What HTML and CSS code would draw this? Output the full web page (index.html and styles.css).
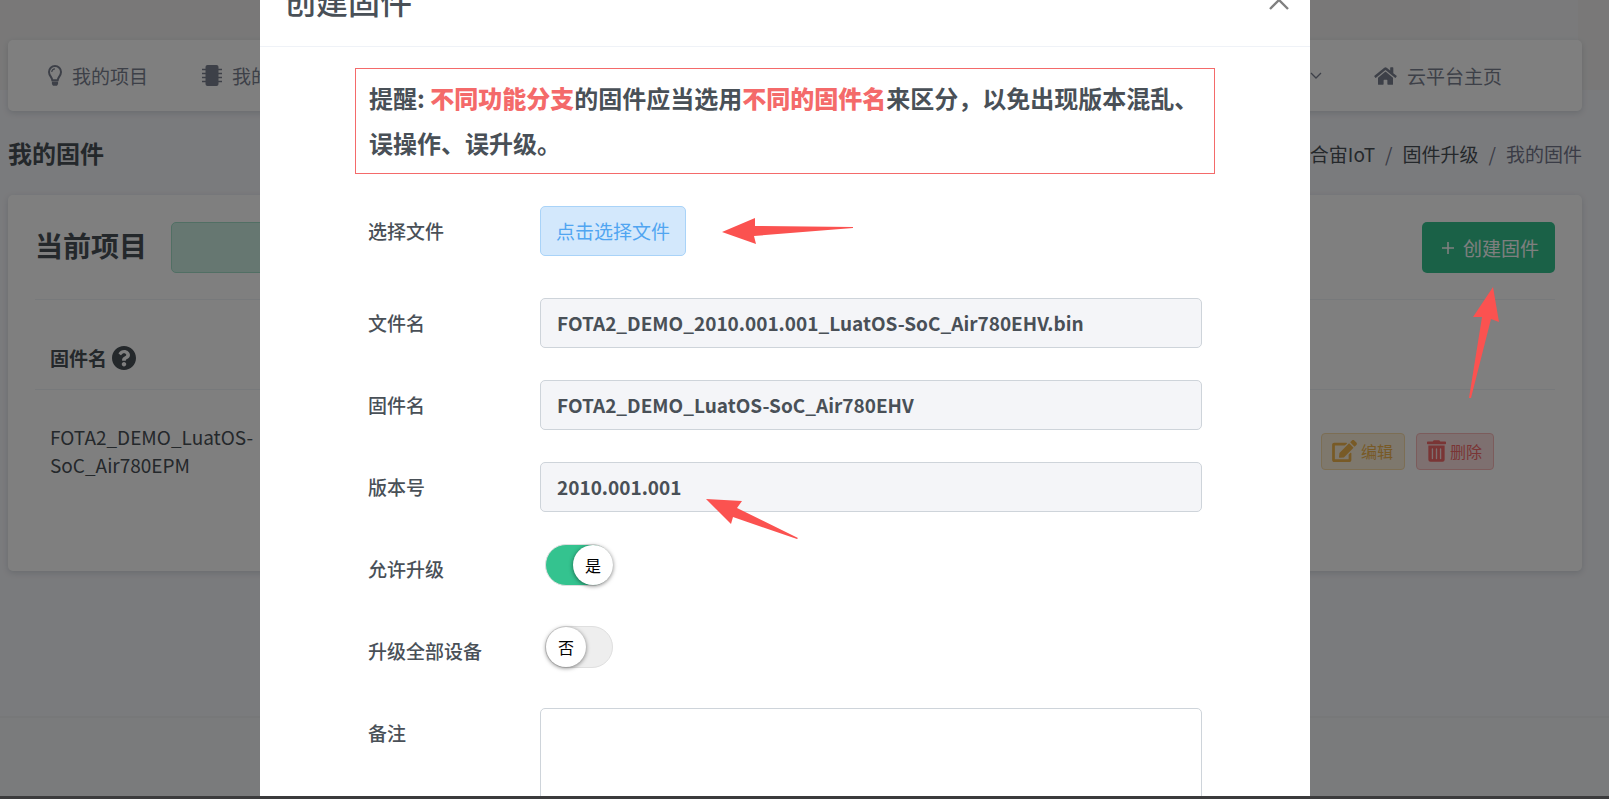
FILE: index.html
```html
<!DOCTYPE html>
<html lang="zh-CN">
<head>
    <meta charset="UTF-8">
    <meta name="viewport" content="width=device-width, initial-scale=1.0">
    <title>我的固件</title>
    <link rel="stylesheet" href="styles.css">
</head>
<body>
    <div class="page">
        <div class="topbar"><div class="user-box"></div></div>

        <nav class="nav">
            <a class="nav-item" href="#">
                <svg class="icon-bulb" viewBox="0 0 14 21"><path fill="none" stroke="currentColor" stroke-width="2" d="M4.3 15.3C4.2 12 1 11 1 7a6 6 0 0 1 12 0c0 4-3.2 5-3.3 8.3z"/><path fill="none" stroke="currentColor" stroke-width="1.2" d="M3.8 7A3.2 3.2 0 0 1 7 3.8"/><path fill="currentColor" d="M3.9 16.5h6.2V19L9 20.8H5L3.9 19z"/></svg>
                我的项目
            </a>
            <a class="nav-item" href="#">
                <svg class="icon-chip" viewBox="0 0 20 21"><rect x="3.5" width="13" height="21" rx="2" fill="currentColor"/><path stroke="currentColor" stroke-width="1.3" d="M0 4.5h20M0 8.5h20M0 12.5h20M0 16.5h20"/></svg>
                我的
            </a>
            <a class="nav-item nav-more" href="#" aria-label="更多">
                <svg class="icon-down" viewBox="0 0 12 8"><path fill="none" stroke="currentColor" stroke-width="1.3" d="M1 1l5 5 5-5"/></svg>
            </a>
            <a class="nav-item" href="#">
                <svg class="icon-home" viewBox="0 0 576 512"><path fill="currentColor" d="M280.37 148.26L96 300.11V464a16 16 0 0 0 16 16l112.06-.29a16 16 0 0 0 15.92-16V368a16 16 0 0 1 16-16h64a16 16 0 0 1 16 16v95.64a16 16 0 0 0 16 16.05L464 480a16 16 0 0 0 16-16V300L295.67 148.26a12.19 12.19 0 0 0-15.3 0zM571.6 251.47L488 182.56V44.05a12 12 0 0 0-12-12h-56a12 12 0 0 0-12 12v72.61L318.47 43a48 48 0 0 0-61 0L4.34 251.47a12 12 0 0 0-1.6 16.9l25.5 31A12 12 0 0 0 45.15 301l235.22-193.74a12.19 12.19 0 0 1 15.3 0L530.9 301a12 12 0 0 0 16.9-1.6l25.5-31a12 12 0 0 0-1.7-16.93z"/></svg>
                云平台主页
            </a>
        </nav>

        <div class="page-title">
            <h4>我的固件</h4>
            <div class="breadcrumb">
                <a href="#">合宙IoT</a><span>/</span><a href="#">固件升级</a><span>/</span><span class="current">我的固件</span>
            </div>
        </div>

        <main class="card">
            <div class="card-head">
                <h3>当前项目</h3>
                <div class="project"></div>
                <button class="btn-create" type="button">
                    <svg viewBox="0 0 12 12"><path stroke="currentColor" stroke-width="1.6" d="M6 0v12M0 6h12"/></svg>
                    创建固件
                </button>
            </div>
            <table>
                <thead>
                    <tr>
                        <th class="col-name">
                            <div class="th-name">
                                固件名
                                <svg class="icon-help" viewBox="8 8 496 496"><path fill="currentColor" d="M504 256c0 136.997-111.043 248-248 248S8 392.997 8 256C8 119.083 119.043 8 256 8s248 111.083 248 248zM262.655 90c-54.497 0-89.255 22.957-116.549 63.758-3.536 5.286-2.353 12.415 2.715 16.258l34.699 26.31c5.205 3.947 12.621 3.008 16.665-2.122 17.864-22.658 30.113-35.797 57.303-35.797 20.429 0 45.698 13.148 45.698 32.958 0 14.976-12.363 22.667-32.534 33.976C247.128 238.528 216 254.941 216 296v4c0 6.627 5.373 12 12 12h56c6.627 0 12-5.373 12-12v-1.333c0-28.462 83.186-29.647 83.186-106.667 0-58.002-60.165-102-116.531-102zM256 338c-25.365 0-46 20.635-46 46 0 25.364 20.635 46 46 46s46-20.636 46-46c0-25.365-20.635-46-46-46z"/></svg>
                            </div>
                        </th>
                        <th></th>
                        <th class="col-action"></th>
                    </tr>
                </thead>
                <tbody>
                    <tr>
                        <td>FOTA2_DEMO_LuatOS-<wbr>SoC_Air780EPM</td>
                        <td></td>
                        <td>
                            <div class="actions">
                                <button class="btn-sm btn-edit" type="button">
                                    <svg class="icon-edit" viewBox="0 0 576 512"><path fill="currentColor" d="M402.6 83.2l90.2 90.2c3.8 3.8 3.8 10 0 13.8L274.4 405.6l-92.8 10.3c-12.4 1.4-22.9-9.1-21.5-21.5l10.3-92.8L388.8 83.2c3.8-3.8 10-3.8 13.8 0zm162-22.9l-48.8-48.8c-15.2-15.2-39.9-15.2-55.2 0l-35.4 35.4c-3.8 3.8-3.8 10 0 13.8l90.2 90.2c3.8 3.8 10 3.8 13.8 0l35.4-35.4c15.2-15.3 15.2-40 0-55.2zM384 346.2V448H64V128h229.8c3.2 0 6.2-1.3 8.5-3.5l40-40c7.6-7.6 2.2-20.5-8.5-20.5H48C21.5 64 0 85.5 0 112v352c0 26.5 21.5 48 48 48h352c26.5 0 48-21.5 48-48V306.2c0-10.7-12.9-16-20.5-8.5l-40 40c-2.2 2.3-3.5 5.3-3.5 8.5z"/></svg>
                                    编辑
                                </button>
                                <button class="btn-sm btn-delete" type="button">
                                    <svg class="icon-trash" viewBox="0 0 448 512"><path fill="currentColor" d="M32 464a48 48 0 0 0 48 48h288a48 48 0 0 0 48-48V128H32zm272-256a16 16 0 0 1 32 0v224a16 16 0 0 1-32 0zm-96 0a16 16 0 0 1 32 0v224a16 16 0 0 1-32 0zm-96 0a16 16 0 0 1 32 0v224a16 16 0 0 1-32 0zM432 32H312l-9.4-18.7A24 24 0 0 0 281.1 0H166.8a23.72 23.72 0 0 0-21.4 13.3L136 32H16A16 16 0 0 0 0 48v32a16 16 0 0 0 16 16h416a16 16 0 0 0 16-16V48a16 16 0 0 0-16-16z"/></svg>
                                    删除
                                </button>
                            </div>
                        </td>
                    </tr>
                </tbody>
            </table>
        </main>

        <footer class="footer"></footer>
    </div>

    <div class="overlay">
        <div class="modal" role="dialog" aria-labelledby="modalTitle">
            <div class="modal-header">
                <h2 id="modalTitle">创建固件</h2>
                <button class="close" type="button" aria-label="关闭">
                    <svg viewBox="0 0 20 20"><path stroke="currentColor" stroke-width="2.4" d="M1 1l18 18M19 1L1 19"/></svg>
                </button>
            </div>
            <form class="modal-body">
                <p class="notice">提醒: <b>不同功能分支</b>的固件应当选用<b>不同的固件名</b>来区分，以免出现版本混乱、误操作、误升级。</p>

                <div class="row row-file">
                    <label for="pick">选择文件</label>
                    <button class="btn-file" id="pick" type="button">点击选择文件</button>
                </div>
                <div class="row">
                    <label for="file">文件名</label>
                    <input class="field" id="file" type="text" value="FOTA2_DEMO_2010.001.001_LuatOS-SoC_Air780EHV.bin" readonly>
                </div>
                <div class="row">
                    <label for="name">固件名</label>
                    <input class="field" id="name" type="text" value="FOTA2_DEMO_LuatOS-SoC_Air780EHV" readonly>
                </div>
                <div class="row">
                    <label for="version">版本号</label>
                    <input class="field" id="version" type="text" value="2010.001.001" readonly>
                </div>
                <div class="row">
                    <label for="allow">允许升级</label>
                    <div class="switch">
                        <input id="allow" type="checkbox" checked>
                        <span class="knob">是</span>
                    </div>
                </div>
                <div class="row">
                    <label for="all">升级全部设备</label>
                    <div class="switch">
                        <input id="all" type="checkbox">
                        <span class="knob">否</span>
                    </div>
                </div>
                <div class="row">
                    <label for="remark">备注</label>
                    <textarea class="field" id="remark"></textarea>
                </div>
            </form>
        </div>
    </div>

    <!-- red pointers -->
    <svg class="arrow arrow-file" viewBox="0 0 132 26"><path d="M0 14L33 0v8l98 1v1L32 18l2 8z"/></svg>
    <svg class="arrow arrow-version" viewBox="0 0 92 41"><path d="M0 0l36 2-5 7 61 30-1 1-64-22-2 7z"/></svg>
    <svg class="arrow arrow-create" viewBox="0 0 30 111"><path d="M24 0l6 35-8-3L2 111H0l13-81H4z"/></svg>

    <div class="bottom-bar"></div>
</body>
</html>
```
FILE: styles.css
```css
:root {
    --green: #34c38f;
    --red: #f46a6a;
    --text: #495057;
    --line: #eff2f7;
}
* {
    box-sizing: border-box;
}
body {
    margin: 0;
    height: 100vh;
    overflow: hidden;
    position: relative;
    font-family: "Noto Sans CJK SC", sans-serif;
    font-size: 19px;
    line-height: 28px;
    color: var(--text);
}
button, input, textarea {
    font-family: inherit;
    font-size: inherit;
}
button {
    cursor: pointer;
}
a {
    color: inherit;
    text-decoration: none;
}
h2, h3, h4, p {
    margin: 0;
}
svg {
    display: block;
    flex: none;
}

/* page */
.page {
    min-height: 100vh;
    display: flex;
    flex-direction: column;
    padding: 0 27px 0 8px;
    background: linear-gradient(#f2f1f1 90px, #f5f6fa 90px);
}
.topbar {
    height: 40px;
    display: flex;
    justify-content: flex-end;
    padding-right: 4px;
}
.user-box {
    width: 108px;
    background: #f4f5f7;
}
.nav {
    height: 71px;
    display: flex;
    align-items: center;
    padding: 0 53px 0 13px;
    background: #fff;
    border-radius: 5px;
    box-shadow: 0 2px 6px rgba(18, 38, 63, 0.15);
    color: #7b8190;
}
.nav-item {
    display: flex;
    align-items: center;
    gap: 10px;
    padding: 0 27px;
}
.nav-more {
    margin-left: auto;
    padding-right: 25px;
}
.icon-bulb {
    width: 14px;
    height: 21px;
}
.icon-chip {
    width: 20px;
    height: 21px;
}
.icon-down {
    width: 12px;
    height: 8px;
}
.icon-home {
    width: 23px;
    height: 20px;
}
.page-title {
    height: 84px;
    display: flex;
    align-items: center;
    justify-content: space-between;
}
.page-title h4 {
    font-size: 24px;
    font-weight: 700;
}
.breadcrumb {
    display: flex;
    gap: 10px;
    padding-top: 2px;
    color: #74788d;
}
.breadcrumb a {
    color: var(--text);
}
.card {
    height: 376px;
    padding: 27px;
    background: #fff;
    border-radius: 5px;
    box-shadow: 0 2px 6px rgba(18, 38, 63, 0.15);
}
.card-head {
    display: flex;
    align-items: flex-start;
    height: 78px;
    border-bottom: 1px solid var(--line);
}
.card-head h3 {
    font-size: 28px;
    font-weight: 700;
    line-height: 46px;
}
.project {
    width: 240px;
    height: 51px;
    margin-left: 24px;
    background: #ccefe3;
    border: 1px solid #a3dfc9;
    border-radius: 5px;
}
.btn-create {
    display: flex;
    align-items: center;
    gap: 9px;
    height: 51px;
    margin-left: auto;
    padding: 0 16px 0 20px;
    color: #fff;
    background: var(--green);
    border: none;
    border-radius: 5px;
}
.btn-create svg {
    width: 12px;
    height: 12px;
}
table {
    width: 100%;
    table-layout: fixed;
    border-collapse: collapse;
}
th {
    padding: 44px 15px 17px;
    font-weight: 700;
    text-align: left;
    border-bottom: 1px solid var(--line);
}
td {
    padding: 33px 15px;
}
.col-name {
    width: 236px;
}
.col-action {
    width: 249px;
}
.th-name {
    display: flex;
    align-items: center;
    gap: 5px;
}
.icon-help {
    width: 24px;
    height: 24px;
}
.actions {
    display: flex;
    gap: 11px;
}
.btn-sm {
    display: flex;
    align-items: center;
    gap: 4px;
    height: 37px;
    padding: 0 11px 0 10px;
    font-size: 16px;
    border: 1px solid;
    border-radius: 4px;
}
.btn-edit {
    color: #f1b44c;
    background: #fcf0db;
    border-color: #f8dca9;
}
.btn-delete {
    color: var(--red);
    background: #fde1e1;
    border-color: #f8b9b9;
}
.icon-edit {
    width: 25px;
    height: 22px;
}
.icon-trash {
    width: 19px;
    height: 22px;
}
.footer {
    flex: 1;
    margin: 145px -27px 0 -8px;
    background: #f5f6f8;
    border-top: 2px solid #eef0f2;
}

/* modal */
.overlay {
    position: absolute;
    inset: 0;
    overflow: hidden;
    padding-right: 39px;
    background: rgba(0, 0, 0, 0.5);
}
.modal {
    width: 1050px;
    max-width: 100%;
    margin: -46px auto 0;
    background: #fff;
}
.modal-header {
    display: flex;
    align-items: center;
    justify-content: space-between;
    height: 93px;
    padding: 0 21px 0 24px;
    border-bottom: 1px solid var(--line);
}
.modal-header h2 {
    font-size: 32px;
    font-weight: 500;
}
.close {
    padding: 0;
    color: #808080;
    background: none;
    border: none;
}
.close svg {
    width: 20px;
    height: 20px;
}
.modal-body {
    padding: 21px 95px 40px;
}
.notice {
    margin-bottom: 32px;
    padding: 6px 13px 8px;
    font-size: 24px;
    font-weight: 700;
    line-height: 45px;
    border: 1px solid var(--red);
}
.notice b {
    color: var(--red);
    font-weight: 900;
}
.row {
    display: flex;
    align-items: flex-start;
    min-height: 50px;
    margin-bottom: 32px;
    padding: 0 13px;
}
.row-file {
    margin-bottom: 42px;
}
.row label {
    flex: none;
    width: 172px;
    line-height: 50px;
    font-weight: 500;
}
.btn-file {
    height: 50px;
    padding: 0 15px 2px;
    color: #50a5f1;
    background: #d3e8fc;
    border: 1px solid #a9d3f8;
    border-radius: 5px;
}
.field {
    flex: 1;
    min-width: 0;
    height: 50px;
    padding: 0 16px 2px;
    color: var(--text);
    font-weight: 700;
    background: #f4f5f8;
    border: 1px solid #ced4da;
    border-radius: 5px;
    outline: none;
}
textarea.field {
    height: 150px;
    background: #fff;
    resize: none;
}
.switch {
    position: relative;
    width: 68px;
    height: 42px;
    margin-left: 5px;
}
.switch input {
    appearance: none;
    display: block;
    width: 100%;
    height: 100%;
    margin: 0;
    background: #eee;
    border: 1px solid #dfdfdf;
    border-radius: 21px;
}
.switch input:checked {
    background: var(--green);
}
.knob {
    position: absolute;
    top: 1px;
    left: 1px;
    width: 40px;
    height: 40px;
    line-height: 40px;
    font-size: 16px;
    text-align: center;
    color: #000;
    background: #fff;
    border-radius: 50%;
    box-shadow: 0 1px 4px rgba(0, 0, 0, 0.5);
    pointer-events: none;
}
.switch input:checked + .knob {
    left: auto;
    right: 0;
}

.arrow {
    position: absolute;
    fill: #fb5250;
}
.arrow-file {
    left: 722px;
    top: 218px;
    width: 132px;
}
.arrow-version {
    left: 706px;
    top: 499px;
    width: 92px;
}
.arrow-create {
    right: 110px;
    top: 287px;
    width: 30px;
}
.bottom-bar {
    position: absolute;
    inset: auto 0 0;
    height: 3px;
    background: #3b3b3c;
}
```
